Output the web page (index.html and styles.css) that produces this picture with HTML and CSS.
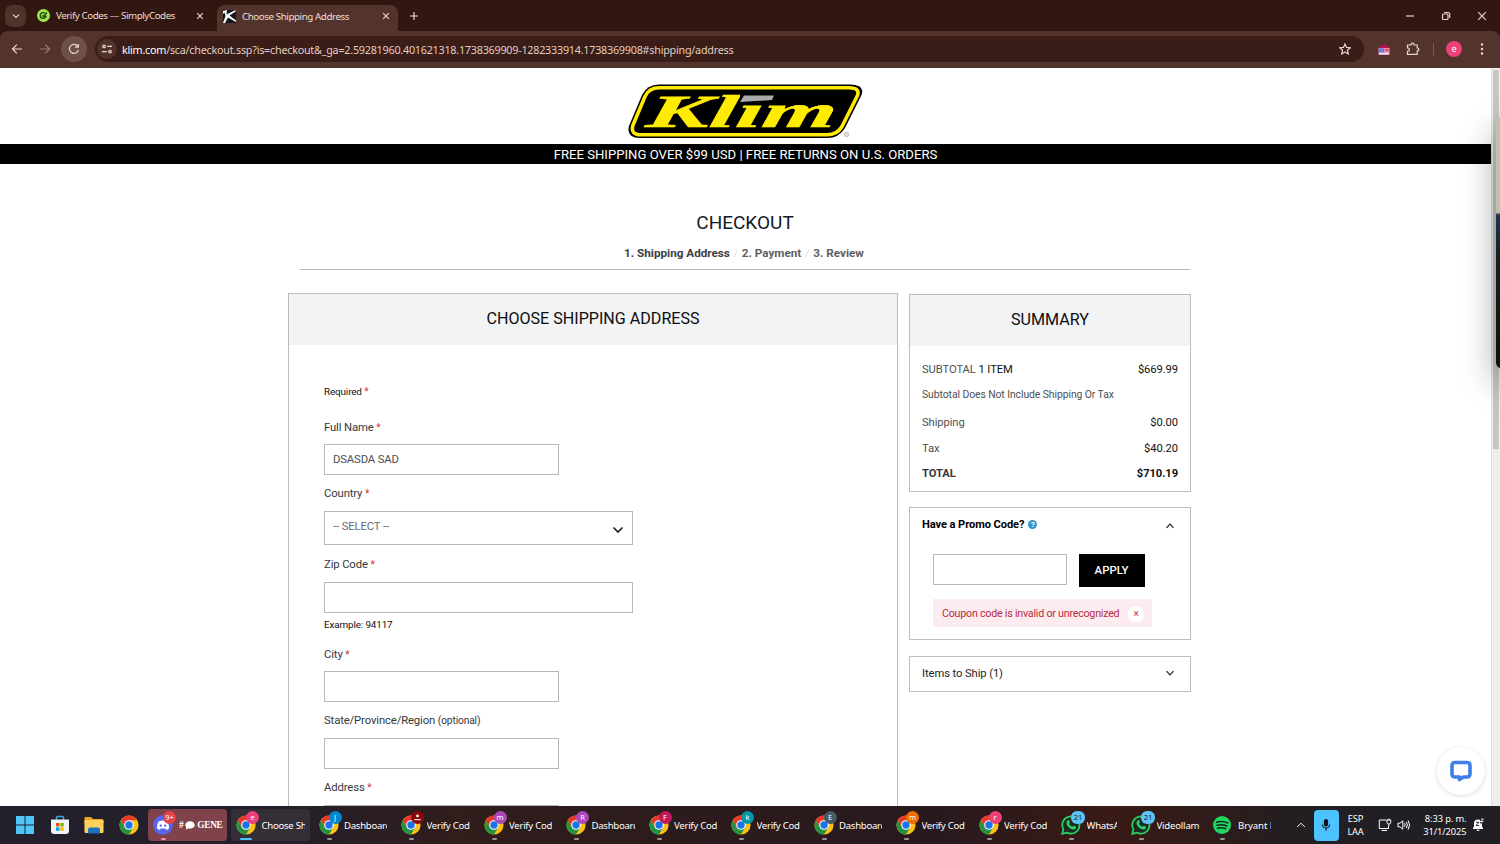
FILE: index.html
```html
<!DOCTYPE html>
<html lang="en">
<head>
<meta charset="utf-8">
<title>Choose Shipping Address</title>
<link rel="stylesheet" href="styles.css">
</head>
<body>
<svg class="defs" width="0" height="0">
  <symbol id="chrome" viewBox="0 0 20 20">
    <circle cx="10" cy="10" r="9.6" fill="#fbc116"/>
    <path d="M1.7 5.2A9.6 9.6 0 0 1 18.3 5.2H10L5.8 12.4Z" fill="#e33b2e"/>
    <path d="M1.7 5.2A9.6 9.6 0 0 0 10 19.6L14.2 12.4H5.8Z" fill="#229342"/>
    <circle cx="10" cy="10" r="4.8" fill="#fff"/><circle cx="10" cy="10" r="3.7" fill="#1a73e8"/>
  </symbol>
  <symbol id="whatsapp" viewBox="0 0 20 20">
    <path d="M1.2 18.8 2.4 14.3A8.6 8.6 0 1 1 5.8 17.6Z" fill="#1c2a22" stroke="#25d366" stroke-width="1.7"/>
    <path d="M6.5 5.4c.6-.7 1.3-.5 1.6.1l.8 1.8c.1.5-.7 1.2-.8 1.5.5 1.400 1.800 2.500 3.300 3 .4-.2 1-1.300 1.500-1.100l2 1c.5.3-.1 1.800-.7 2.300-2.200 1.500-5.300-.3-7-2.200C5.500 9.900 4.700 7.200 6.500 5.400Z" fill="#25d366"/>
  </symbol>
</svg>

<header class="tabstrip">
  <div class="tab-search"><svg width="10" height="10" viewBox="0 0 10 10"><path d="M2 3.600 5 6.400 8 3.600"/></svg></div>
  <div class="tab tab-idle">
    <svg class="favicon" width="13" height="13" viewBox="0 0 13 13"><circle cx="6.500" cy="6.500" r="6.500" fill="#9be84a"/><path d="M9.800 3.500 6.800 7.600 5.300 6.500M8 4C5 2.800 2.600 5 3.300 7.500c.8 2.500 5 2.500 6-.8" fill="none" stroke="#1d3b12" stroke-width="1.300"/></svg>
    <span class="tab-title t-verify">Verify Codes — SimplyCodes</span>
    <svg class="close" width="8" height="8" viewBox="0 0 8 8"><path d="M1.200 1.200 6.800 6.800M6.800 1.200 1.200 6.800"/></svg>
  </div>
  <div class="tab tab-active">
    <svg class="favicon" width="13" height="13" viewBox="0 0 13 13"><rect width="13" height="13" fill="#17171c"/><path d="M0 1 4 0 3.500 4.500 12.500 0 12.500 1.500 6.500 5.500 13 10.500V12L5 7.500 2 13H0L2.500 6 1.500 2.500 0 4Z" fill="#fff"/></svg>
    <span class="tab-title t-choose">Choose Shipping Address</span>
    <svg class="close" width="8" height="8" viewBox="0 0 8 8"><path d="M1.200 1.200 6.800 6.800M6.800 1.200 1.200 6.800"/></svg>
  </div>
  <svg class="newtab" width="10" height="10" viewBox="0 0 10 10"><path d="M5 1V9M1 5H9"/></svg>
  <div class="window-controls">
    <svg width="10" height="10" viewBox="0 0 10 10"><path d="M1 5H9"/></svg>
    <svg width="10" height="10" viewBox="0 0 10 10"><rect x="1.500" y="3" width="5.500" height="5.500" rx="1"/><path d="M3.200 1.500H7.200Q8.700 1.500 8.700 3V7"/></svg>
    <svg width="10" height="10" viewBox="0 0 10 10"><path d="M1.200 1.200 8.800 8.800M8.800 1.200 1.200 8.800"/></svg>
  </div>
</header>

<nav class="toolbar">
  <svg class="nav-back" width="14" height="14" viewBox="0 0 14 14"><path d="M12 7H2.500M6.800 2.700 2.500 7 6.800 11.300"/></svg>
  <svg class="nav-fwd" width="14" height="14" viewBox="0 0 14 14"><path d="M2 7H11.500M7.200 2.700 11.500 7 7.200 11.300"/></svg>
  <div class="reload"><svg width="14" height="14" viewBox="0 0 14 14"><path d="M10.700 4.300A4.500 4.500 0 1 0 11.400 8M11.300 2V5.200H8.100"/></svg></div>
  <div class="omnibox">
    <div class="site-info"><svg width="12" height="12" viewBox="0 0 12 12"><circle cx="3" cy="3.400" r="1.300"/><path d="M6.200 3.400H11M1 8.600H5.800"/><circle cx="9" cy="8.600" r="1.300"/></svg></div>
    <span class="url"><b>klim.com</b>/sca/checkout.ssp?is=checkout&amp;_ga=2.59281960.401621318.1738369909-1282333914.1738369908#shipping/address</span>
    <svg class="star" width="12" height="12" viewBox="0 0 12 12"><path d="M6 .9 7.500 4.400 11.300 4.700 8.400 7.200 9.300 10.900 6 8.900 2.700 10.900 3.600 7.200.7 4.700 4.500 4.400Z"/></svg>
  </div>
  <svg class="ext" width="12" height="14" viewBox="0 0 12 14"><path d="M.5 6.500 2 4H5.500V1H7V4H10L11.500 6.500Z" fill="#b80f55"/><rect x=".5" y="6" width="11" height="7" fill="#e98ab0"/><rect x="1" y="6.500" width="5" height="4" fill="#5c7df0"/><rect x="7" y="7" width="3.500" height="2" fill="#f6465d"/><path d="M1 11.500H11" stroke="#e8eaff" stroke-width="1.500"/></svg>
  <svg class="puzzle" width="14" height="14" viewBox="0 0 14 14"><path d="M1.500 3H5Q5 1.200 6.500 1.200T8 3H11.200V6Q13 6 13 7.400T11.200 8.800V12.300H1.500V9.400Q3.500 9.200 3.500 7.600T1.500 5.900Z"/></svg>
  <i class="divider"></i>
  <span class="avatar">e</span>
  <svg class="menu" width="4" height="14" viewBox="0 0 4 14"><circle cx="2" cy="2.500" r="1.200"/><circle cx="2" cy="7" r="1.200"/><circle cx="2" cy="11.500" r="1.200"/></svg>
</nav>

<div class="viewport">
  <main class="page">
    <div class="brand">
      <svg width="240" height="60" viewBox="0 0 240 60">
        <path d="M33 2.500H224Q240 2.500 235 14L219 46Q213 56 201 56H14Q0 56 3 44L16 13Q21 2.500 33 2.500Z" fill="#000"/>
        <path d="M33 5.800H223Q235 5.800 231 14.500L216 44.500Q211 52.800 201 52.800H15Q4 52.800 7 43L19 14.500Q23 5.800 33 5.800Z" fill="none" stroke="#ffec00" stroke-width="3.600"/>
        <text class="logo-text" transform="translate(19 44.500) skewX(-11)" textLength="189" lengthAdjust="spacingAndGlyphs">Klim</text>
        <path d="M114 9H156V20.500H114Z" fill="#000"/>
        <path d="M118 13.500H148L146 18 114 20Z" fill="#aaa"/>
        <circle cx="220.500" cy="52.500" r="2.300" fill="#ddd" stroke="#bbb" stroke-width=".8"/>
      </svg>
    </div>
    <div class="banner"><span>FREE SHIPPING OVER $99 USD | FREE RETURNS ON U.S. ORDERS</span></div>
    <section class="checkout-head">
      <h1>CHECKOUT</h1>
      <div class="steps"><b class="active-step">1. Shipping Address</b><i>/</i><b>2. Payment</b><i>/</i><b>3. Review</b></div>
    </section>
    <div class="columns">
      <section class="panel address">
        <h2>CHOOSE SHIPPING ADDRESS</h2>
        <form class="form">
          <p class="small required">Required <em>*</em></p>
          <label class="first">Full Name <em>*</em></label>
          <div class="input">DSASDA SAD</div>
          <label>Country <em>*</em></label>
          <div class="input select"><span>-- SELECT --</span><svg width="12" height="8" viewBox="0 0 12 8"><path d="M1.500 1.500 6 6 10.500 1.500"/></svg></div>
          <label class="after-select">Zip Code <em>*</em></label>
          <div class="input wide"></div>
          <p class="small">Example: 94117</p>
          <label class="city">City <em>*</em></label>
          <div class="input tight"></div>
          <label>State/Province/Region <small>(optional)</small></label>
          <div class="input"></div>
          <label>Address <em>*</em></label>
          <div class="input"></div>
        </form>
      </section>
      <aside class="side">
        <section class="panel summary">
          <h2>SUMMARY</h2>
          <div class="rows">
            <p><span class="sub">SUBTOTAL <strong>1 ITEM</strong></span><span class="amount">$669.99</span></p>
            <p class="note">Subtotal Does Not Include Shipping Or Tax</p>
            <p class="ship">Shipping<span class="amount">$0.00</span></p>
            <p class="tax">Tax<span class="amount">$40.20</span></p>
            <p class="total">TOTAL<span class="amount">$710.19</span></p>
          </div>
        </section>
        <section class="panel promo">
          <div class="row-head"><b>Have a Promo Code?</b><span class="help">?</span><svg width="10" height="8" viewBox="0 0 10 8"><path d="M1.500 5.800 5 2.200 8.500 5.800"/></svg></div>
          <div class="promo-form"><div class="code"></div><button>APPLY</button></div>
          <div class="alert"><span>Coupon code is invalid or unrecognized</span><i>×</i></div>
        </section>
        <section class="panel items"><span>Items to Ship (1)</span><svg width="10" height="8" viewBox="0 0 10 8"><path d="M1.500 2.200 5 5.800 8.500 2.200"/></svg></section>
      </aside>
    </div>
  </main>
  <div class="scrollbar"><div class="thumb"></div></div>
  <div class="floating-window"></div>
  <div class="chat"><svg width="24" height="24" viewBox="0 0 24 24"><path d="M6 3.500H18Q21 3.500 21 6.500V15Q21 18 18 18H14.500L10.500 20.500V18H6Q3 18 3 15V6.500Q3 3.500 6 3.500Z"/></svg></div>
</div>

<footer class="taskbar">
  <div class="pinned">
    <svg width="20" height="20" viewBox="0 0 20 20"><path d="M1 1H9.500V9.500H1ZM10.500 1H19V9.500H10.500ZM1 10.500H9.500V19H1ZM10.500 10.500H19V19H10.500Z" fill="#4fc5f8"/></svg>
    <svg width="20" height="20" viewBox="0 0 20 20"><path d="M6.500 5V2.500Q6.500 1.500 7.500 1.500H12.500Q13.500 1.500 13.500 2.500V5" fill="none" stroke="#3ba6dd" stroke-width="1.500"/><path d="M1 4.500H19V16Q19 19 16 19H4Q1 19 1 16Z" fill="#f1f2f5"/><path d="M6 8H9.500V11.500H6Z" fill="#f25022"/><path d="M10.300 8H13.800V11.500H10.300Z" fill="#7fba00"/><path d="M6 12.300H9.500V15.800H6Z" fill="#00a4ef"/><path d="M10.300 12.300H13.800V15.800H10.300Z" fill="#ffb900"/></svg>
    <svg width="20" height="20" viewBox="0 0 20 20"><path d="M.5 3Q.5 2 1.500 2H7L9 4H18Q19.500 4 19.500 5.500V8H.5Z" fill="#e9a81e"/><rect x=".5" y="5" width="19" height="13" rx="1.200" fill="#ffd15c"/><path d="M4 18.500V14.500Q4 12.500 6 12.500H14Q16 12.500 16 14.500V18.500Z" fill="#1574bd"/></svg>
    <svg width="20" height="20"><use href="#chrome"/></svg>
  </div>
  <div class="task discord"><div class="icon"><svg width="20" height="20" viewBox="0 0 20 20"><circle cx="10" cy="10" r="9.800" fill="#5865f2"/><path d="M5.500 6.500Q10 4.500 14.500 6.500 16.300 9.800 16 13.500 14.500 14.700 13 14.800L12.300 13.500H7.700L7 14.800Q5.500 14.700 4 13.500 3.700 9.800 5.500 6.500Z" fill="#fff"/><circle cx="7.800" cy="10.600" r="1.200" fill="#5865f2"/><circle cx="12.200" cy="10.600" r="1.200" fill="#5865f2"/></svg><span class="badge red">9+</span></div>
    <span class="label serif">#<svg width="10" height="9" viewBox="0 0 10 9"><ellipse cx="5" cy="4" rx="4.800" ry="3.700" fill="#fff"/><path d="M1.500 5 .8 8.800 5 6.500Z" fill="#fff"/></svg>GENE</span></div>
  <div class="task current"><div class="icon"><svg width="20" height="20"><use href="#chrome"/></svg><span class="badge pink">e</span></div><span class="label">Choose Sh</span></div>
  <div class="task"><div class="icon"><svg width="20" height="20"><use href="#chrome"/></svg><span class="badge blue">J</span></div><span class="label">Dashboard</span></div>
  <div class="task"><div class="icon"><svg width="20" height="20"><use href="#chrome"/></svg><span class="badge dark"><svg width="13" height="13" viewBox="0 0 12 12"><circle cx="6" cy="4.500" r="1.300" fill="#eee"/><path d="M3 8H9" stroke="#eee"/></svg></span></div><span class="label">Verify Cod</span></div>
  <div class="task"><div class="icon"><svg width="20" height="20"><use href="#chrome"/></svg><span class="badge purple">m</span></div><span class="label">Verify Cod</span></div>
  <div class="task"><div class="icon"><svg width="20" height="20"><use href="#chrome"/></svg><span class="badge purple">R</span></div><span class="label">Dashboard</span></div>
  <div class="task"><div class="icon"><svg width="20" height="20"><use href="#chrome"/></svg><span class="badge crimson">F</span></div><span class="label">Verify Cod</span></div>
  <div class="task"><div class="icon"><svg width="20" height="20"><use href="#chrome"/></svg><span class="badge teal">k</span></div><span class="label">Verify Cod</span></div>
  <div class="task"><div class="icon"><svg width="20" height="20"><use href="#chrome"/></svg><span class="badge slate">E</span></div><span class="label">Dashboard</span></div>
  <div class="task"><div class="icon"><svg width="20" height="20"><use href="#chrome"/></svg><span class="badge orange">m</span></div><span class="label">Verify Cod</span></div>
  <div class="task"><div class="icon"><svg width="20" height="20"><use href="#chrome"/></svg><span class="badge pink">r</span></div><span class="label">Verify Cod</span></div>
  <div class="task whats"><div class="icon"><svg width="20" height="20"><use href="#whatsapp"/></svg><span class="badge count">21</span></div><span class="label">WhatsA</span></div>
  <div class="task video"><div class="icon"><svg width="20" height="20"><use href="#whatsapp"/></svg><span class="badge count">21</span></div><span class="label">Videollam</span></div>
  <div class="task spotify"><div class="icon"><svg width="20" height="20" viewBox="0 0 20 20"><circle cx="10" cy="10" r="9" fill="#1ed760"/><path d="M4.500 7.200Q10.500 5.400 15.800 8M5 10.300Q10.300 8.800 14.800 11M5.500 13.200Q10 12 13.800 13.800" fill="none" stroke="#17271c" stroke-width="1.500" stroke-linecap="round"/></svg></div><span class="label">Bryant M</span></div>
  <div class="tray">
    <svg class="up" width="10" height="8" viewBox="0 0 10 8"><path d="M1.200 6 5 2.200 8.800 6"/></svg>
    <div class="mic"><svg width="12" height="14" viewBox="0 0 12 14"><rect x="3.900" y="1" width="4.200" height="7.500" rx="2.100" fill="#101418"/><path d="M2.300 6.500Q2.300 10.200 6 10.200T9.700 6.500M6 10.200V12.800" fill="none" stroke="#101418"/></svg></div>
    <div class="lang">ESP<br>LAA</div>
    <svg class="net" width="14" height="14" viewBox="0 0 14 14"><path d="M8.300 2H1.300V10.500H10.500V8M3.500 12.500H9M10.800 8V6M9 2V4.500Q9 6 10.800 6T12.700 4.500V2ZM10 .8V2M11.700 .8V2"/></svg>
    <svg class="vol" width="14" height="12" viewBox="0 0 14 12"><path d="M1 4.200H3L5.800 1.800V10.200L3 7.800H1ZM7.600 4.200Q8.600 6 7.600 7.800M9.400 2.800Q11.300 6 9.400 9.200M11.200 1.500Q13.900 6 11.200 10.500"/></svg>
    <div class="clock">8:33 p. m.<br>31/1/2025</div>
    <svg class="bell" width="12" height="14" viewBox="0 0 12 14"><path d="M1 11V10L2 8.500V5Q2 1.500 6 1.500T10 5V8.500L11 10V11ZM4.300 11.700H7.700Q7.200 13 6 13T4.300 11.700Z" fill="#fff"/><path d="M4 4.300H7L4 7.500H7M8 2.500H10.500L8 5H10.500" fill="none" stroke="#222" stroke-width=".9"/><path d="M9 1H11.500L9 3.500H11.500" fill="none" stroke="#fff" stroke-width=".8"/></svg>
  </div>
</footer>
</body>
</html>
```
FILE: styles.css
```css
* { box-sizing: border-box; }
body { margin: 0; width: 1500px; height: 844px; overflow: hidden; display: flex; flex-direction: column; background: #fff; font-family: Roboto, sans-serif; }
h1, h2, p { margin: 0; font-weight: 400; }
svg { display: block; flex: none; }
.defs { position: absolute; }

/* Browser chrome */
.tabstrip, .toolbar { font-family: "Noto Sans", sans-serif; color: #f0ddd6; }
.tabstrip svg, .toolbar svg { fill: none; stroke: #e9d5cd; stroke-width: 1.2; }
.tabstrip { height: 31px; background: #321710; display: flex; align-items: center; padding-left: 5px; }
.tab-search { width: 21px; height: 22px; border-radius: 7px; background: #50322b; display: grid; place-items: center; }
.tab { display: flex; align-items: center; }
.tab .favicon { stroke: none; margin-right: 6px; }
.tab-title { width: 140px; font-size: 9.8px; letter-spacing: -0.46px; white-space: nowrap; }
.t-choose { letter-spacing: -0.44px; }
.tab-idle { margin-left: 11px; width: 180px; }
.tab-active { align-self: flex-end; height: 26px; width: 181px; padding: 0 0 4px 6px; background: #53342c; border-radius: 8px 8px 0 0; }
.newtab { margin-left: 11px; }
.window-controls { margin-left: auto; display: flex; gap: 26px; padding-right: 13px; }
.toolbar { height: 37px; background: #53342c; border-radius: 8px 8px 0 0; display: flex; align-items: center; padding: 0 0 1px 10px; }
body { background: linear-gradient(#321710 60px, #fff 60px); }
.nav-fwd { margin-left: 14px; opacity: .45; }
.reload { width: 26px; height: 26px; margin-left: 9px; border-radius: 50%; background: #6d5048; display: grid; place-items: center; }
.omnibox { margin-left: 8px; width: 1269px; height: 26px; border-radius: 13px; background: #391d16; display: flex; align-items: center; padding: 0 13px 0 2px; }
.site-info { width: 20px; height: 20px; border-radius: 50%; background: #50322b; display: grid; place-items: center; }
.url { margin-left: 5px; font-size: 10.8px; letter-spacing: -0.25px; white-space: nowrap; color: #e2cdc4; }
.url b { font-weight: 400; color: #fff; }
.star { margin-left: auto; }
.toolbar .ext { stroke: none; margin-left: 14px; }
.puzzle { margin-left: 16px; }
.divider { width: 1px; height: 13px; margin-left: 13px; background: #7a5c53; }
.avatar { width: 16px; height: 16px; margin-left: 12px; border-radius: 50%; background: #ec407a; color: #fff; font-size: 9px; line-height: 15px; text-align: center; }
.toolbar .menu { margin-left: 18px; fill: #e9d5cd; stroke: none; }

/* Store page */
.viewport { height: 738px; display: flex; position: relative; overflow: hidden; }
.page { width: 1491px; height: 738px; overflow: hidden; background: #fff; }
.scrollbar { width: 9px; background: #eee; border-left: 1px solid #ddd; padding: 2px 1px 0; }
.thumb { height: 379px; background: #c6c6c6; }
.floating-window { position: absolute; left: 1496px; top: 49px; width: 30px; height: 251px; border-radius: 5px; background: linear-gradient(#c0c1aa 0 38%, #26344e 39%, #15201f 55%, #100f0d); box-shadow: 0 14px 34px rgba(0,0,0,.36); }
.brand { height: 76px; padding: 14px 0 0 626px; }
.logo-text { font: italic 700 46px "Liberation Serif", serif; fill: #ffec00; stroke: #ffec00; stroke-width: .6; }
.banner { height: 20px; background: #000; color: #fff; text-align: center; font-size: 13.15px; line-height: 21px; }
.checkout-head { width: 890px; height: 106px; margin-left: 300px; padding-top: 46px; border-bottom: 1px solid #b5b9bd; text-align: center; }
h1 { height: 26px; line-height: 26px; font-size: 19px; color: #131b26; }
.steps { display: flex; justify-content: center; height: 18px; margin: 8px 2px 0 0; font-size: 11.7px; line-height: 18px; color: #5c5f62; }
.active-step { color: #3d4043; }
.steps i { width: 12px; color: #d0d5dc; text-align: center; font-style: normal; font-weight: 300; }
.columns { display: flex; gap: 11px; padding: 23px 0 0 288px; align-items: flex-start; }
.panel { border: 1px solid #b9bdc0; background: #fff; }
h2 { height: 51px; background: #f1f3f5; color: #0d0d0f; font-size: 16.1px; line-height: 50px; text-align: center; }
.address { width: 610px; height: 600px; }
.form { padding: 37px 0 0 35px; font-size: 11.3px; letter-spacing: -0.13px; color: #34383c; }
.form p, .form label { display: block; height: 18px; line-height: 20px; }
.form label { margin-top: 9px; }
.form label.first { margin-top: 18px; }
.form label.after-select { margin-top: 10px; }
.form label.city { margin-top: 12px; }
.form .small { font-size: 9.9px; color: #111; margin-top: 2px; }
.form .required { margin-top: 0; }
em { color: #d0303a; font-style: normal; font-size: 10px; }
small { font-size: 10.2px; }
.input { width: 235px; height: 31px; margin-top: 8px; border: 1px solid #b5b9bc; padding-left: 8px; line-height: 29px; color: #4d5054; }
label:not(.first):not(.city) + .input { margin-top: 9px; }
.input.wide, .input.select { width: 309px; }
.input.select { height: 34px; display: flex; align-items: center; justify-content: space-between; padding-right: 8px; color: #6a6d70; }
.input.select span { line-height: 26px; margin-bottom: 2px; }
.input.select svg { margin-top: 4px; }
.select svg, .side svg { fill: none; stroke: #222; stroke-width: 1.7; }
.side { width: 282px; padding-top: 1px; }
.summary { height: 198px; }
.rows { padding: 14px 12px 0; font-size: 11.2px; letter-spacing: -0.08px; color: #4d5054; }
.rows p { display: flex; justify-content: space-between; height: 18px; line-height: 20px; }
.rows strong { font-weight: 400; color: #111; }
.rows .amount { color: #111; }
.rows .note { margin-top: 7px; font-size: 10.4px; }
.rows .ship { margin-top: 10px; }
.rows .tax { margin-top: 8px; }
.rows .total { margin-top: 7px; font-weight: 700; color: #34383c; }
.promo { height: 133px; margin-top: 15px; padding: 7px 12px 0; }
.row-head { display: flex; align-items: center; height: 18px; font-size: 11.1px; letter-spacing: -0.08px; color: #000; }
.help { width: 9px; height: 9px; margin-left: 4px; border-radius: 50%; background: #3097c9; color: #fff; font-size: 8px; font-weight: 700; line-height: 9px; text-align: center; }
.row-head svg { margin: 3px 3px 0 auto; }
.side .row-head svg, .side .items svg { stroke-width: 1.2; }
.promo-form { display: flex; align-items: flex-start; gap: 12px; margin: 21px 0 0 11px; }
.code { width: 134px; height: 31px; border: 1px solid #b5b9bc; }
button { width: 66px; height: 33px; padding: 0 1px 1px 0; border: 0; background: #000; color: #fff; font: 500 11.4px Roboto, sans-serif; }
.alert { display: flex; align-items: center; width: 219px; height: 28px; margin: 12px 0 0 11px; padding-left: 9px; background: #fcecef; color: #b92b43; font-size: 10.7px; letter-spacing: -0.23px; white-space: nowrap; }
.alert span { width: 178px; }
.alert i { flex: none; width: 16px; height: 16px; margin: 2px 0 0 8px; border-radius: 50%; background: #fff; font-style: normal; font-size: 10px; line-height: 16px; text-align: center; }
.items { display: flex; align-items: center; justify-content: space-between; height: 36px; margin-top: 16px; padding: 0 15px 2px 12px; font-size: 11.2px; letter-spacing: -0.08px; color: #222; }
.chat { position: absolute; left: 1437px; top: 679px; width: 48px; height: 48px; border-radius: 50%; background: #fff; box-shadow: 0 1px 4px rgba(0,0,0,.15); display: grid; place-items: center; }
.chat svg { fill: none; stroke: #3f7fe8; stroke-width: 3.6; stroke-linejoin: round; }

/* Taskbar */
.taskbar { height: 38px; display: flex; align-items: center; background: linear-gradient(90deg, #23202b 0 18%, #301d1c 30%, #2b1b1c 50%, #28191e 62%, #391a15 74%, #2c1c1c 82%, #211f24 88%); color: #fff; font-family: "Noto Sans", sans-serif; }
.pinned { display: flex; gap: 14.6px; width: 148px; padding-left: 15px; }
.task { position: relative; display: flex; align-items: center; flex: none; width: 79px; height: 32px; margin-right: 3.5px; padding-left: 5px; border-radius: 4px; }
.task::after { content: ""; position: absolute; left: 13px; bottom: 1px; width: 5px; height: 2px; border-radius: 1px; background: #9b9495; }
.discord { background: #81434b; margin-right: 4px; }
.discord::after { background: #ff8aa5; }
.current { background: #342e36; }
.current::after { left: 9px; width: 12px; background: #4cc2ff; }
.icon { position: relative; flex: none; width: 20px; height: 20px; }
.badge { position: absolute; left: 10px; top: -4px; width: 13px; height: 13px; border-radius: 50%; font-size: 7.5px; line-height: 12px; text-align: center; color: #fff; }
.red { background: #e5434a; }
.pink { background: #ec407a; }
.blue { background: #0288d1; }
.dark { background: #8c0808; }
.purple { background: #ab47bc; }
.crimson { background: #c2185b; }
.teal { background: #0097a7; }
.slate { background: #455a64; }
.orange { background: #ef6c00; }
.count { width: 14px; background: #5cc1f5; color: #123; border-radius: 6px; }
.label { width: 43px; margin-left: 5.5px; overflow: hidden; white-space: nowrap; font-size: 9.6px; letter-spacing: -0.27px; }
.serif { display: flex; align-items: center; gap: 2px; margin-left: 6px; width: 45px; font: 700 9.3px "Liberation Serif", serif; letter-spacing: -0.3px; }
.whats { width: 66.5px; }
.whats .label { width: 30px; }
.video { width: 77.5px; }
.video .label { width: 44px; letter-spacing: -0.2px; }
.spotify .label { width: 33px; margin-left: 6px; letter-spacing: -0.1px; }
.tray { display: flex; align-items: center; margin-left: 6px; font-size: 9.3px; line-height: 13px; }
.tray svg { fill: none; stroke: #fff; stroke-width: 1; }
.tray .bell { stroke: none; margin-left: 5px; }
.mic { width: 25px; height: 31px; margin-left: 8px; border-radius: 4px; background: #4cc2ff; display: grid; place-items: center; }
.tray .mic svg { stroke: none; }
.lang { width: 18px; margin-left: 8px; text-align: center; letter-spacing: -0.2px; }
.net { margin-left: 13px; }
.vol { margin-left: 5px; }
.clock { width: 46px; margin-left: 10px; text-align: right; white-space: nowrap; letter-spacing: -0.1px; }
```
